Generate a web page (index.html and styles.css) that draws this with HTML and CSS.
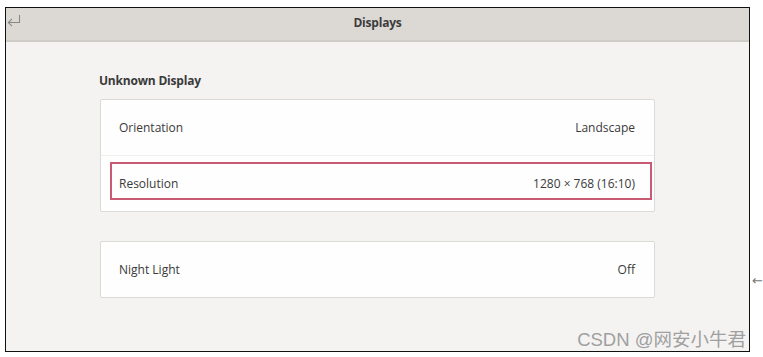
FILE: index.html
```html
<!DOCTYPE html>
<html>
<head>
<meta charset="utf-8">
<link rel="stylesheet" href="styles.css">
</head>
<body>
<div class="frame">
  <header class="titlebar">
    <svg class="back" width="15" height="14" viewBox="0 0 15 14">
      <path d="M13.5 1 V8.5 H2.5 M6 4.8 L2.3 8.5 L6 12.2" fill="none" stroke="#8a8986" stroke-width="1.1"/>
    </svg>
    <div class="title">Displays</div>
  </header>
  <main class="content">
    <div class="column">
      <h2 class="section">Unknown Display</h2>
      <div class="card">
        <div class="row"><span>Orientation</span><span>Landscape</span></div>
        <div class="row sep highlighted"><span>Resolution</span><span>1280 × 768 (16:10)</span></div>
      </div>
      <div class="card card2">
        <div class="row"><span>Night Light</span><span>Off</span></div>
      </div>
    </div>
  </main>
  <div class="watermark">CSDN @网安小牛君</div>
</div>
<div class="side-arrow">←</div>
</body>
</html>
```
FILE: styles.css
```css
html, body {
  margin: 0;
  padding: 0;
  background: #ffffff;
}
body {
  padding: 7px 0 0 5px;
  font-family: "Open Sans", "Noto Sans", sans-serif;
  position: relative;
  width: 763px;
  height: 357px;
  box-sizing: border-box;
}
.frame {
  width: 745px;
  height: 345px;
  box-sizing: border-box;
  border: 1px solid #111;
  background: #f4f3f2;
  position: relative;
  display: flex;
  flex-direction: column;
}
.titlebar {
  height: 34px;
  box-sizing: border-box;
  background: #dcd9d5;
  border-bottom: 2px solid #cfcbc6;
  position: relative;
  display: flex;
  align-items: center;
  justify-content: center;
}
.back {
  position: absolute;
  left: 0px;
  top: 6px;
}
.title {
  font-weight: 700;
  font-size: 12px;
  color: #3c3c3c;
  margin-top: -3px;
  letter-spacing: -0.2px;
}
.content {
  flex: 1;
}
.column {
  width: 555px;
  margin: 0 auto;
}
.section {
  margin: 0;
  padding-top: 31px;
  height: 26px;
  box-sizing: content-box;
  font-size: 12px;
  font-weight: 700;
  color: #3a3a3a;
  line-height: 16px;
  letter-spacing: -0.2px;
  margin-left: -1px;
}
.card {
  background: #fefefe;
  border: 1px solid #dcdad6;
  border-radius: 2px;
}
.card2 {
  margin-top: 29px;
}
.row {
  height: 55px;
  display: flex;
  align-items: center;
  justify-content: space-between;
  padding: 0 19px 0 18px;
  font-size: 12px;
  color: #3a3a3a;
  position: relative;
}
.row.sep {
  border-top: 1px solid #f0efed;
}
.highlighted::after {
  content: "";
  position: absolute;
  left: 9px;
  right: 2px;
  top: 6px;
  bottom: 11px;
  border: 2px solid #c85a74;
}
.watermark {
  position: absolute;
  right: 3px;
  bottom: 0px;
  font-family: "Liberation Sans", "Noto Sans CJK SC", sans-serif;
  font-size: 18.5px;
  color: #a0a0a0;
  line-height: 22px;
}
.side-arrow {
  position: absolute;
  left: 752px;
  top: 273px;
  font-size: 13px;
  color: #777;
  font-family: "DejaVu Sans", sans-serif;
}
```
